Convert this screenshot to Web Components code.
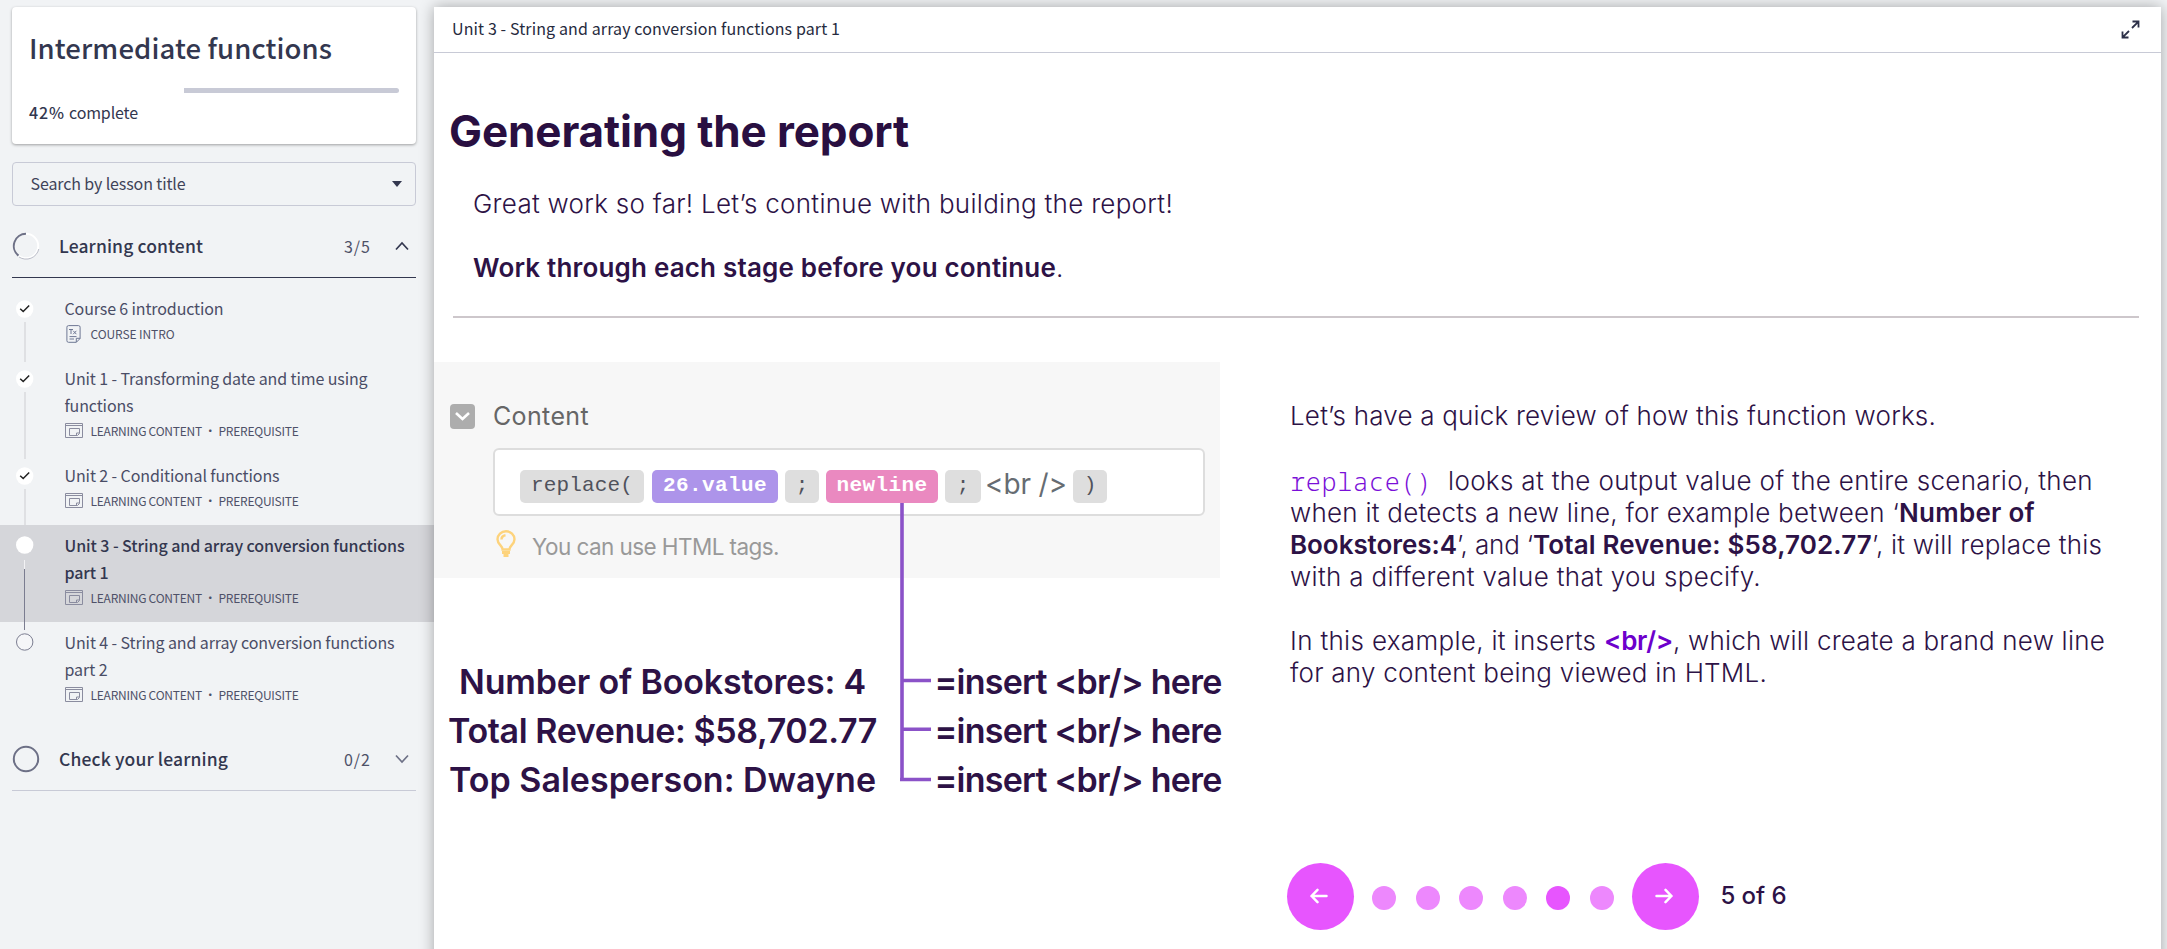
<!DOCTYPE html>
<html lang="en">
<head>
<meta charset="utf-8">
<title>Intermediate functions</title>
<style>
html,body{margin:0;height:100%;overflow:hidden;background:#f1f3f5}
</style>
</head>
<body>
<course-app></course-app>
<script>
const define = (name, html, setup) => {
  const tpl = document.createElement('template');
  tpl.innerHTML = html;
  customElements.define(name, class extends HTMLElement {
    constructor() {
      super();
      this.attachShadow({mode: 'open'}).append(tpl.content.cloneNode(true));
    }
    connectedCallback() { if (setup) setup(this, this.shadowRoot); }
  });
};

/* Text run tracked out to an exact measure: w = width in px */
define('fit-text', `<style>:host{display:inline-block;white-space:pre;flex:none}span{display:inline-block}</style><span><slot></slot></span>`,
  (el, root) => {
    const w = +el.getAttribute('w');
    const span = root.querySelector('span');
    const n = el.textContent.length;
    span.style.letterSpacing = '0px';
    const natural = span.getBoundingClientRect().width;
    span.style.letterSpacing = ((w - natural) / n) + 'px';
    el.style.width = w + 'px';
  });

define('progress-card', `<style>
:host{display:block;box-sizing:border-box;height:137px;border-radius:4px;background:#fff;padding:19px 17px 0 17px;box-shadow:0 1px 3px rgba(0,0,0,.35);color:#33374f}
h1{margin:0;font-size:27.5px;line-height:42px;font-weight:500;height:62px}
.bar{height:5px;border-radius:3px;background:linear-gradient(90deg,#fff 155px,#c8cad6 155px)}
p{margin:7px 0 0;font-size:16px;line-height:24px;display:flex;gap:4px}
b{font-weight:500}
</style>
<h1><fit-text w="303">Intermediate functions</fit-text></h1>
<div class="bar"></div>
<p><b><fit-text w="36">42%</fit-text></b><fit-text w="69">complete</fit-text></p>`);

define('lesson-search', `<style>
:host{display:flex;box-sizing:border-box;height:44px;margin-top:18px;border:1px solid #c8cad6;border-radius:4px;padding:0 13px 2px 17.5px;align-items:center;justify-content:space-between;font-size:16px;line-height:24px;color:#3f4359}
svg{display:block;margin-top:1px}
</style><fit-text w="155">Search by lesson title</fit-text>
<svg width="10" height="6"><path d="M0 0h10L5 6z" fill="#33374f"/></svg>`);

define('section-head', `<style>
:host{display:flex;box-sizing:border-box;height:62px;align-items:center;border-bottom:1px solid #c8cad6;color:#33374f;font-size:17.5px;line-height:26px}
:host([open]){border-color:#33374f}
.title{margin:-2px 0 0 19px;font-weight:500;flex:1}
.count{font-size:16px;color:#4e5168;margin:-2px 24px 0 0}
svg{display:block;flex:none;position:relative;top:-1px}.up,:host([open]) .down,.part,:host([open]) .ring{display:none}
:host([open]) .up,:host([open]) .part{display:block}
.chev{margin-right:7px}
</style>
<svg class="ring" width="28" height="28"><circle cx="14" cy="14" r="12.2" fill="none" stroke="#6d7086" stroke-width="2"/></svg>
<svg class="part" width="28" height="28"><circle cx="14" cy="14" r="12.2" fill="none" stroke="#fff" stroke-width="2"/><path d="M26.8 17A13 13 0 0 1 7 25" fill="none" stroke="#aaacba" stroke-width=".8"/><path d="M14 1.8A12.2 12.2 0 0 0 6.5 23.6" fill="none" stroke="#6d7086" stroke-width="2"/></svg>
<div class="title"><slot></slot></div><div class="count"><slot name="count"></slot></div>
<svg class="chev up" width="14" height="10"><path d="M1 8.5 7 2l6 6.5" fill="none" stroke="#33374f" stroke-width="1.7"/></svg>
<svg class="chev down" width="14" height="10"><path d="M1 1.5 7 8l6-6.5" fill="none" stroke="#6d7086" stroke-width="1.7"/></svg>`);

define('lesson-row', `<style>
:host{display:flex;position:relative;margin:0 -18px 0 -12px;padding:7px 0 12px 16px;color:#4a4d66;font-size:16px;line-height:27px;height:51px}
:host([two]){height:78px}
:host([current]){background:#d5d6da;color:#33374f}
:host([current]) .name{font-weight:500}
.rail{width:18px;margin-right:30.5px;position:relative;flex:none}
.dot{display:block;margin-top:5px}
:host([current]) .dot,:host([todo]) .dot{margin-top:4px}
.ring,:host([current]) .tick,:host([todo]) .done{display:none}
:host([todo]) .ring{display:inline}
.line{position:absolute;left:8px;top:27px;bottom:-16px;width:2px;background:#dfe0e3}
:host([current]) .line{left:8px;width:1.3px;top:28px;bottom:-20px;background:linear-gradient(#f2f2f4 9px,#7b7d90 9px)}
:host([todo]) .line{display:none}
.meta{display:flex;align-items:center;height:20px;margin-top:2px;font-size:12px;line-height:18px;font-weight:400;color:#4e5168}
.ic{width:26px;flex:none;height:18px}
.ic svg{display:block}
.doc,:host([intro]) .box{display:none!important}:host([intro]) .doc{display:block!important}
</style>
<div class="rail"><div class="line"></div><svg class="dot" width="18" height="18"><g class="done"><circle cx="8.7" cy="9" r="8.7" fill="#fff"/><path class="tick" d="M4.2 8.700 7.200 11.500 13.200 5.500" fill="none" stroke="#222" stroke-width="1.5"/></g><circle class="ring" cx="8.7" cy="9" r="8.2" fill="#f5f6f8" stroke="#7b7d90"/></svg></div>
<div><div class="name"><slot></slot></div>
<div class="meta"><div class="ic">
<svg class="doc" width="18" height="18" fill="none" stroke="#6f7894"><path d="M3.500 .6h10a1.600 1.600 0 0 1 1.600 1.600v11.300l-3.800 3.800H3.500a1.600 1.600 0 0 1-1.600-1.600V2.200A1.600 1.600 0 0 1 3.500 .6zM11.300 17.200v-3.900h3.800M4.500 11.600h7M4.500 14h4.500M4 4.500h4M6 4.500v4.500M8.200 5.800l3.200 3.400M11.400 5.800 8.200 9.200"/></svg>
<svg class="box" width="20" height="18" fill="none" stroke="#8a8c9f"><path d="M.5 1.500h17v14H.5zM.5 3.500h17M4.500 6.500h10v5l-2 2h-8zM11.500 13.500v-2.500h3"/></svg></div>
<slot name="meta"></slot></div></div>`);

define('course-sidebar', `<style>
:host{display:block;box-sizing:border-box;width:434px;padding:7px 18px 0 12px;background:#f1f3f5;font-family:"Noto Sans CJK SC","Noto Sans",sans-serif}
section-head.first{margin-top:10px}.list{padding:10px 0 10px}
section-head.second{height:62px}
</style>
<progress-card></progress-card>
<lesson-search></lesson-search>
<section-head class="first" open><fit-text w="144">Learning content</fit-text><fit-text slot="count" w="27">3/5</fit-text></section-head>
<div class="list">
<lesson-row intro><fit-text w="159">Course 6 introduction</fit-text><fit-text slot="meta" w="84">COURSE INTRO</fit-text></lesson-row>
<lesson-row two><fit-text w="303">Unit 1 - Transforming date and time using</fit-text><br><fit-text w="69">functions</fit-text><fit-text slot="meta" w="208">LEARNING CONTENT · PREREQUISITE</fit-text></lesson-row>
<lesson-row><fit-text w="215">Unit 2 - Conditional functions</fit-text><fit-text slot="meta" w="208">LEARNING CONTENT · PREREQUISITE</fit-text></lesson-row>
<lesson-row two current><fit-text w="340">Unit 3 - String and array conversion functions</fit-text><br><fit-text w="44">part 1</fit-text><fit-text slot="meta" w="208">LEARNING CONTENT · PREREQUISITE</fit-text></lesson-row>
<lesson-row two todo><fit-text w="330">Unit 4 - String and array conversion functions</fit-text><br><fit-text w="43">part 2</fit-text><fit-text slot="meta" w="208">LEARNING CONTENT · PREREQUISITE</fit-text></lesson-row>
</div>
<section-head class="second"><fit-text w="169">Check your learning</fit-text><fit-text slot="count" w="27">0/2</fit-text></section-head>`);

define('unit-header', `<style>
:host{display:flex;box-sizing:border-box;height:46px;border-bottom:1px solid #c8cad6;padding:0 21px 0 18px;align-items:center;justify-content:space-between;font:400 16px/24px "Noto Sans CJK SC","Noto Sans",sans-serif;color:#262a3e}
svg{display:block}fit-text{margin-top:-3px}
</style><fit-text w="388">Unit 3 - String and array conversion functions part 1</fit-text>
<svg width="19" height="19" fill="none" stroke="#2c3048" stroke-width="1.800"><path d="M11 8 17.200 1.800M11.500 1.500h6v6M8 11 1.800 17.200M1.500 11.500v6h6"/></svg>`);

define('code-chip', `<style>
:host{display:flex;box-sizing:border-box;height:33px;border-radius:5px;background:#dedede;color:#50525c;align-items:center;justify-content:center;font:400 21px/30px "Liberation Mono",monospace;flex:none;padding-bottom:1px}
:host([kind=value]){background:#ad94ea;color:#fff;font-weight:700}
:host([kind=key]){background:#ea89c0;color:#fff;font-weight:700}
</style><slot></slot>`,
  el => { el.style.width = el.getAttribute('w') + 'px'; el.style.marginLeft = (el.getAttribute('gap') || 0) + 'px'; });

define('function-editor', `<style>
:host{display:block;box-sizing:border-box;height:216px;background:#f7f7f7;padding:41px 15px 0 16px;font-family:Inter,sans-serif}
.top{display:flex;align-items:center;height:26px;gap:18px;font-size:25px;line-height:26px;color:#666}
svg{display:block;flex:none}
.input{display:flex;align-items:center;box-sizing:border-box;height:68px;margin:19px 0 0 43px;border:2px solid #ddd;border-radius:6px;background:#fff;padding:8px 0 0 25px}
.br{font-size:28px;line-height:34px;color:#666c72;margin:-4px 0 0 4px}
.hint{display:flex;margin:14px 0 0 46px;gap:16px;font-size:22.500px;line-height:34px;color:#999}
</style>
<div class="top"><svg width="25" height="25"><rect width="25" height="25" rx="4" fill="#adadad"/><path d="m6 9 6.500 6L19 9" fill="none" stroke="#fff" stroke-width="2.600"/></svg><fit-text w="96">Content</fit-text></div>
<div class="input"><code-chip w="124"><fit-text w="102">replace(</fit-text></code-chip><code-chip kind="value" w="126" gap="8"><fit-text w="104">26.value</fit-text></code-chip><code-chip w="34" gap="7">;</code-chip><code-chip kind="key" w="112" gap="7"><fit-text w="91">newline</fit-text></code-chip><code-chip w="36" gap="7">;</code-chip><fit-text class="br" w="82">&lt;br /&gt;</fit-text><code-chip w="34" gap="6">)</code-chip></div>
<div class="hint"><svg width="20" height="28" fill="none" stroke="#fdd37c" stroke-width="2.400"><path d="M6.600 19.500C6.500 15.500 1.500 14.500 1.500 9.300a8.400 8 0 0 1 17 0c0 5.200-5 6.200-5.100 10.200zM5.500 9.500C5.500 7 7.500 5.500 9.500 5.200"/><path d="M6 22.500h8M7.500 25.500h5" stroke-width="2.800"/></svg><fit-text w="247">You can use HTML tags.</fit-text></div>`);

define('report-result', `<style>
:host{display:grid;grid-template-columns:429px 286px;column-gap:58px;grid-auto-rows:49px;margin:79px 0 0 14px;justify-items:center;font:600 34px/49px Inter,sans-serif;color:#2d1246}
</style>
<fit-text w="407">Number of Bookstores: 4</fit-text><fit-text w="287">=insert &lt;br/&gt; here</fit-text>
<fit-text w="429">Total Revenue: $58,702.77</fit-text><fit-text w="287">=insert &lt;br/&gt; here</fit-text>
<fit-text w="427">Top Salesperson: Dwayne</fit-text><fit-text w="287">=insert &lt;br/&gt; here</fit-text>`);

define('insert-links', `<style>
:host{display:block;position:absolute;left:466px;top:141px;width:32px;height:280px}svg{display:block}
</style><svg width="32" height="280" fill="none" stroke="#8b52c8" stroke-width="3.600"><path d="M2 0v278M0 276.500h31M2 177.500h29M2 226.300h29"/></svg>`);

define('pager-nav', `<style>
:host{display:flex;align-items:center;height:67px;margin:174px 0 0 -3px;font:500 24px/30px Inter,sans-serif;color:#2d1246}
.btn{width:67px;height:67px;border-radius:50%;background:#e755fe;display:flex;align-items:center;justify-content:center;flex:none}
.dots{display:flex;gap:19.600px;margin:3px 18.5px 0 18px}
.dots i{width:24px;height:24px;border-radius:50%;background:#ed88fd}
.dots i.on{background:#e755fe}
svg{display:block;margin:-1px 0 0 -4px}fit-text{margin-left:21px;margin-top:-2px}
</style>
<div class="btn"><svg width="18" height="16" fill="none" stroke="#fff" stroke-width="2.500" stroke-linecap="round" stroke-linejoin="round"><path d="M16.500 8H1.500M7.500 1.800 1.500 8l6 6.200"/></svg></div>
<div class="dots"><i></i><i></i><i></i><i></i><i class="on"></i><i></i></div>
<div class="btn"><svg width="18" height="16" fill="none" stroke="#fff" stroke-width="2.500" stroke-linecap="round" stroke-linejoin="round"><path d="M1.500 8h15M10.500 1.800l6 6.200-6 6.200"/></svg></div>
<fit-text w="66">5 of 6</fit-text>`);

define('review-text', `<style>
:host{display:block;font:300 26px/32px Inter,sans-serif;color:#2d1246}
p{margin:0 0 32px}p.a{margin-bottom:33px}
.l{display:flex;height:32px}
b{font-weight:600}
.code{font-family:"Noto Sans Mono","Liberation Mono",monospace;font-size:25px;color:#7a0fd8;font-weight:300}
.fn{color:#6d00cc}
</style>
<p class="a"><fit-text w="646">Let’s have a quick review of how this function works.</fit-text></p>
<p><span class="l"><fit-text class="code" style="font-family:'Noto Sans Mono','DejaVu Sans Mono',monospace" w="142">replace()</fit-text><fit-text style="margin-left:16px" w="645">looks at the output value of the entire scenario, then</fit-text></span>
<span class="l"><fit-text w="609">when it detects a new line, for example between ‘</fit-text><b><fit-text w="136">Number of</fit-text></b></span>
<span class="l"><b><fit-text w="167">Bookstores:4</fit-text></b><fit-text w="76">’, and ‘</fit-text><b><fit-text w="339">Total Revenue: $58,702.77</fit-text></b><fit-text w="230">’, it will replace this</fit-text></span>
<span class="l"><fit-text w="471">with a different value that you specify.</fit-text></span></p>
<p style="margin:0"><span class="l"><fit-text w="314">In this example, it inserts </fit-text><b class="fn"><fit-text w="69">&lt;br/&gt;</fit-text></b><fit-text w="432">, which will create a brand new line</fit-text></span>
<span class="l"><fit-text w="477">for any content being viewed in HTML.</fit-text></span></p>`);

define('lesson-slide', `<style>
:host{display:block;color:#290f41;font-family:Inter,sans-serif}
h2{margin:0;padding:50px 0 0 15px;font-size:44px;line-height:56px;font-weight:700}
.intro{margin:29px 0 0 39px;font-size:26px;line-height:32px;font-weight:300;color:#2d1246}
.intro div{height:32px}.intro div+div{margin-top:32px}
b{font-weight:600}
hr{border:0;height:2px;margin:32px 22px 0 19px;background:#cdc7cb}
.cols{display:grid;grid-template-columns:786px 1fr;column-gap:70px;margin-top:44px;position:relative}
.right{padding-top:38px}
</style>
<h2><fit-text w="460">Generating the report</fit-text></h2>
<div class="intro"><div><fit-text w="700">Great work so far! Let’s continue with building the report!</fit-text></div>
<div><b><fit-text w="583">Work through each stage before you continue</fit-text></b>.</div></div>
<hr>
<div class="cols"><div><function-editor></function-editor><report-result></report-result></div>
<div class="right"><review-text></review-text><pager-nav></pager-nav></div><insert-links></insert-links></div>`);

define('course-app', `<style>
:host{display:flex;height:949px;width:2167px;overflow:hidden;background:#f1f3f5}
main{flex:1;margin:7px 6px 0 0;background:#fff;box-shadow:0 0 14px rgba(0,0,0,.32);position:relative;min-width:0;height:960px}
</style><course-sidebar></course-sidebar><main><unit-header></unit-header><lesson-slide></lesson-slide></main>`);
</script>
</body>
</html>
